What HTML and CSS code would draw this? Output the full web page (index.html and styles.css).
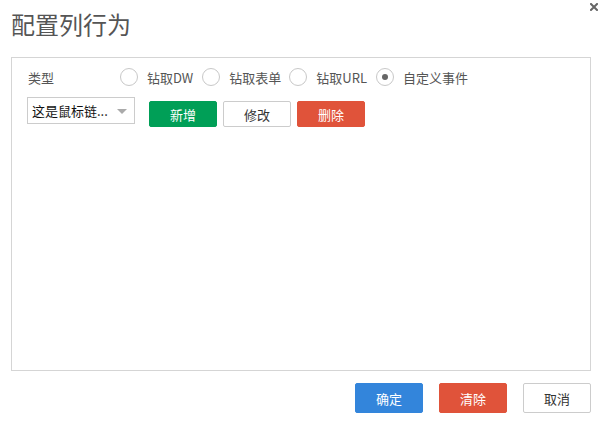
FILE: index.html
```html
<!DOCTYPE html>
<html>
<head>
<meta charset="utf-8">
<link rel="stylesheet" href="styles.css">
</head>
<body>
<div class="dialog">
  <div class="header">
    <h1 class="title">配置列行为</h1>
    <span class="close">
      <svg width="8" height="8" viewBox="0 0 8 8"><path d="M1 1L7 7M7 1L1 7" stroke="#666" stroke-width="2" stroke-linecap="square"/></svg>
    </span>
  </div>
  <div class="panel">
    <div class="row type-row">
      <span class="label">类型</span>
      <div class="radios">
        <label class="radio"><span class="circle"></span><span>钻取DW</span></label>
        <label class="radio"><span class="circle"></span><span>钻取表单</span></label>
        <label class="radio"><span class="circle"></span><span>钻取URL</span></label>
        <label class="radio"><span class="circle checked"></span><span>自定义事件</span></label>
      </div>
    </div>
    <div class="row action-row">
      <div class="select"><span class="select-text">这是鼠标链...</span><span class="caret"></span></div>
      <div class="btns">
        <button class="btn green">新增</button>
        <button class="btn plain">修改</button>
        <button class="btn red">删除</button>
      </div>
    </div>
  </div>
  <div class="footer">
    <button class="btn big blue">确定</button>
    <button class="btn big red">清除</button>
    <button class="btn big plain">取消</button>
  </div>
</div>
</body>
</html>
```
FILE: styles.css
```css
* { box-sizing: border-box; }
html, body { margin: 0; padding: 0; background: #fff; }
body {
  width: 606px; height: 425px; overflow: hidden;
  font-family: "Noto Sans CJK SC", "Noto Sans", sans-serif;
  color: #555;
}
.dialog { width: 606px; height: 425px; }
.header { position: relative; height: 57px; }
.title {
  margin: 0; padding: 9px 0 0 11px;
  font-size: 24px; font-weight: normal; line-height: 30px; color: #555;
}
.close { position: absolute; left: 590px; top: 3px; width: 8px; height: 8px; }
.close svg { display: block; }
.panel {
  margin-left: 11px; width: 580px; height: 314px;
  border: 1px solid #d5d5d5;
  padding: 9px 0 0 15px;
}
.row { display: flex; align-items: center; }
.type-row { height: 20px; }
.label { font-size: 13px; width: 93px; padding-left: 1px; }
.radios { display: flex; align-items: center; }
.radio { display: flex; align-items: center; font-size: 13px; margin-right: 9px; }
.radio:nth-child(2) { margin-right: 8px; }
.circle {
  width: 18px; height: 18px; border-radius: 50%;
  border: 1px solid #c8c8c8; margin-right: 9px; position: relative;
}
.circle.checked::after {
  content: ""; position: absolute; left: 5px; top: 5px;
  width: 6px; height: 6px; border-radius: 50%; background: #666;
}
.action-row { margin-top: 10px; align-items: flex-start; }
.select {
  width: 108px; height: 27px; border: 1px solid #ccc;
  display: flex; align-items: center; justify-content: space-between;
  padding: 0 7px 0 4px; font-size: 13px; color: #111;
}
.caret {
  width: 0; height: 0; border-left: 5px solid transparent; border-right: 5px solid transparent;
  border-top: 5px solid #aaa; margin-top: 1px;
}
.btns { display: flex; gap: 6px; margin-left: 14px; margin-top: 4px; }
.btn {
  font-family: inherit; font-size: 13px; width: 68px; height: 26px;
  border: 1px solid transparent; border-radius: 2px; padding: 0; color: #fff;
}
.btn.green { background: #009f57; border-color: #009f57; }
.btn.red { background: #e0533a; border-color: #e0533a; }
.btn.blue { background: #3385db; border-color: #3385db; }
.btn.plain { background: #fff; border-color: #ccc; color: #333; }
.footer {
  display: flex; justify-content: flex-end; gap: 16px;
  padding: 12px 15px 0 0;
}
.btn.big { height: 30px; }
```
